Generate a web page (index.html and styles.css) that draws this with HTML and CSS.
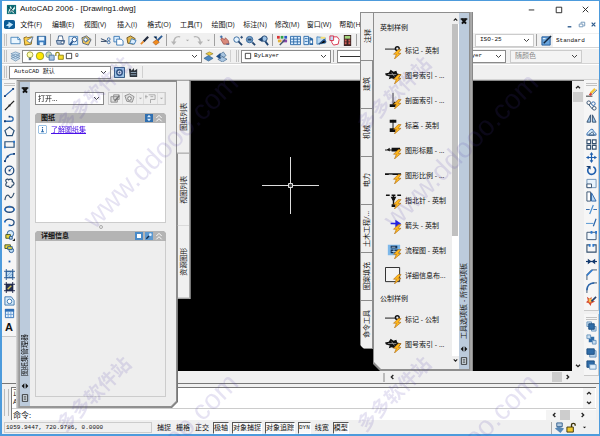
FILE: index.html
```
<!DOCTYPE html>
<html lang="zh-CN">

<head>
    <meta charset="UTF-8">
    <meta name="viewport" content="width=device-width, initial-scale=1.0">
    <title>AutoCAD 2006 - [Drawing1.dwg]</title>
    <link rel="stylesheet" href="styles.css">
</head>

<body>

    <!-- icon sprite -->
    <svg class="sprite" aria-hidden="true">
        <symbol id="logo" viewBox="0 0 12 12"><path fill="#0c6f78" d="M1 1h10v10H1z"/><path fill="#d8f4ee" d="M2 10 5 2l2 4 2-4 1 3-2 2 2 3H8L6 8l-2 2z"/><path stroke="#083c50" fill="none" d="m2 3 8 7M3 10l6-8"/></symbol>
        <symbol id="dwg" viewBox="0 0 12 12"><rect y="1" width="12" height="10" rx="2" fill="#0d5c96"/><path fill="#bfe4fa" d="m2 7 3-2V3l5 3-5 4V8z"/></symbol>
        <symbol id="new" viewBox="0 0 12 12"><path fill="#eaf6ff" stroke="#4b88bd" d="M1 2.500h8l2 2v5H1z"/><path fill="none" stroke="#4b88bd" d="M8.500 2v3H11"/></symbol>
        <symbol id="open" viewBox="0 0 12 12"><path fill="#ffd04a" stroke="#8a6a1c" d="m1 3 3-1 1 1 5-1-1 8-7 1z"/><path fill="#fff" stroke="#365f94" stroke-width=".7" d="m4 6 7-4-3 7z"/></symbol>
        <symbol id="save" viewBox="0 0 12 12"><path fill="#3d7fc0" stroke="#225a94" d="M1.500 1.500h9v9h-9z"/><path fill="#e8f4ff" d="M3 2h6v4H3zM4 8h4v3H4z"/></symbol>
        <symbol id="print" viewBox="0 0 12 12"><path fill="#fff" stroke="#426087" d="M4 1h4l1 5H3z"/><path fill="#a8bdd8" stroke="#426087" d="M1.500 6h9l-1 4h-7z"/><circle cx="8" cy="8" r="1.500" fill="#fff" stroke="#426087"/></symbol>
        <symbol id="preview" viewBox="0 0 12 12"><path fill="#dff0ff" stroke="#4b88bd" d="M1 1.500h9.500v9H1z"/><circle cx="7" cy="5" r="2.500" fill="#fff" stroke="#28548c"/><path stroke="#28548c" stroke-width="2" d="m5 7-3 4"/></symbol>
        <symbol id="publish" viewBox="0 0 12 12"><path fill="#f4c858" stroke="#54627b" d="m1 3 5-2 5 4-3 6-6-2z"/><circle cx="5" cy="5" r="2" fill="#fff" stroke="#3d6ca4"/><path stroke="#3d6ca4" d="m5 8 5-4"/></symbol>
        <symbol id="cut" viewBox="0 0 12 12"><path stroke="#253b5c" fill="none" d="m1 4 7 3M1 7h6"/><circle cx="9.500" cy="4.500" r="1.500" fill="none" stroke="#3b6ea7"/><circle cx="9.500" cy="8" r="1.500" fill="none" stroke="#3b6ea7"/></symbol>
        <symbol id="copy" viewBox="0 0 12 12"><path fill="#d9edff" stroke="#3d7ab4" d="M1 1.500h6v6H1z"/><path fill="#fff" stroke="#3d7ab4" d="M4 4.500h5l2 2V11H4z"/></symbol>
        <symbol id="paste" viewBox="0 0 12 12"><path fill="#e8ba4a" stroke="#6e5520" d="m1 3 4-2 5 3-2 6-6-1z"/><path fill="#d9edff" stroke="#3d7ab4" d="m6 4 5 2-2 4-5-1z"/></symbol>
        <symbol id="match" viewBox="0 0 12 12"><path stroke="#222b3d" stroke-width="2.400" d="m5 7 5-5"/><path stroke="#e88b2a" stroke-width="2" d="m2 10 3-3"/></symbol>
        <symbol id="brush" viewBox="0 0 12 12"><path stroke="#2b5b93" stroke-width="2" d="m6 6 5-5"/><path fill="#f08c1e" stroke="#9b4a12" stroke-width=".6" d="m1 8 4-3 3 3-4 3z"/><path stroke="#2b5b93" d="M2 2h3v3"/></symbol>
        <symbol id="undo" viewBox="0 0 12 12"><path fill="none" stroke="#b4b4b4" stroke-width="1.500" d="M10 2C5 1 3 4 3 9"/><path fill="#b4b4b4" d="M0 7h6l-3 4z"/></symbol>
        <symbol id="redo" viewBox="0 0 12 12"><path fill="none" stroke="#b4b4b4" stroke-width="1.500" d="M2 2c5-1 7 2 7 7"/><path fill="#b4b4b4" d="M12 7H6l3 4z"/></symbol>
        <symbol id="pan" viewBox="0 0 12 12"><path fill="#d98a7c" stroke="#8d3f38" stroke-width=".7" d="m2 5 1-2 3 2 1-2 3 3 1 4H5z"/><path stroke="#2c5ea0" d="M1 2h3M2.500.500v3M8 10h3"/></symbol>
        <symbol id="zoom" viewBox="0 0 12 12"><circle cx="5" cy="5" r="3" fill="#e6f4ff" stroke="#35679c"/><path stroke="#23456e" stroke-width="2" d="m7 7 4 4"/><path stroke="#23456e" d="M9 2.500h3M10.500 1v3"/></symbol>
        <symbol id="zoomwin" viewBox="0 0 12 12"><circle cx="5" cy="5" r="3.500" fill="#7ba5cc" stroke="#35679c"/><path stroke="#23456e" stroke-width="2" d="m8 8 3 3"/><path fill="#2f4c6e" d="M3 4h4v2H3z"/></symbol>
        <symbol id="zoomprev" viewBox="0 0 12 12"><circle cx="7" cy="4" r="3" fill="#9ec3e5" stroke="#1f4573"/><path stroke="#1f4573" stroke-width="2" d="m8 7 3 4"/><path fill="#1f4573" d="m0 5 5-3v6z"/></symbol>
        <symbol id="props" viewBox="0 0 12 12"><path fill="#da3535" d="M0 1h3v3H0z"/><path fill="#2fa04a" d="M4 1h3v3H4z"/><path fill="#2a56c4" d="M8 1h3v3H8z"/><path fill="#e3b43c" d="M1 5h4v3H1z"/><path fill="#8b46ae" d="M6 5h5v3H6z"/><path stroke="#45576e" stroke-width="1.500" d="m3 11 6-6"/></symbol>
        <symbol id="center" viewBox="0 0 12 12"><path fill="#d9edff" stroke="#2c6aa8" d="M.500 1.500h11v9H.500z"/><path stroke="#2c6aa8" d="M4 2v8M8 2v8M1 4.500h10M1 7.500h10"/></symbol>
        <symbol id="palettes" viewBox="0 0 12 12"><path fill="#d9edff" stroke="#2c6aa8" d="M1 1.500h5v9H1z"/><path stroke="#2c6aa8" d="M2 4h3M2 7h3"/><path fill="#2c6aa8" d="m7 2 4 2v7H7z"/><path fill="#fff" d="M8 6h2v3H8z"/></symbol>
        <symbol id="sheets" viewBox="0 0 12 12"><path fill="#b8d9f2" stroke="#4b88bd" d="m1 2 9 1v6l-9 1z"/><path stroke="#27548a" stroke-width="1.500" d="m3 10 6-5 2 3"/><path fill="#f7df72" d="M5 2h5v2H5z"/></symbol>
        <symbol id="markup" viewBox="0 0 12 12"><path fill="#fff" stroke="#d8304a" d="M3 2h6l2 3-1 5-5 1-2-3z"/><path fill="#c3daf4" stroke="#d8304a" d="M1 1h4v5H1z"/></symbol>
        <symbol id="calc" viewBox="0 0 12 12"><path fill="#3d2525" d="M2 0h8v12H2z"/><path fill="#a5d67c" d="M3 1h6v3H3z"/><path fill="#d25d55" d="M3 5h2v2H3zM7 5h2v2H7zM3 8h2v2H3zM7 8h2v2H7z"/></symbol>
        <symbol id="style" viewBox="0 0 12 12"><path fill="#69a4dc" stroke="#215b9c" d="M1 2h9v9H1z"/><path stroke="#10263f" stroke-width="1.600" d="m3 9 8-8"/><path stroke="#fff" d="M2 4h3"/></symbol>
        <symbol id="layers" viewBox="0 0 12 12"><path fill="#c9def0" stroke="#5d84a8" stroke-width=".7" d="m1 8 5-2 5 2-5 3zM1 5.500l5-2 5 2-5 3zM1 3l5-2 5 2-5 3z"/></symbol>
        <symbol id="bulb" viewBox="0 0 12 12"><circle cx="6" cy="4.500" r="3.500" fill="#ffffb0" stroke="#9c9a2c"/><path fill="#5a7187" d="M4.500 8h3v3h-3z"/></symbol>
        <symbol id="sun" viewBox="0 0 12 12"><circle cx="6" cy="6" r="4.500" fill="#ffe600" stroke="#8c9620"/></symbol>
        <symbol id="freeze" viewBox="0 0 12 12"><circle cx="4.500" cy="4.500" r="3.500" fill="#c6d9a8" stroke="#6486a0"/><path fill="#a9c6e4" stroke="#416f9d" d="M5 5h6v6H5z"/></symbol>
        <symbol id="unlock" viewBox="0 0 12 12"><path fill="none" stroke="#9b8a14" stroke-width="1.500" d="M1 6V3c0-2 4-2 4 0v2"/><path fill="#f4dc2a" stroke="#86780c" d="M4 5h6v5H4z"/></symbol>
        <symbol id="square" viewBox="0 0 12 12"><path fill="#fff" stroke="#222" stroke-width="1.200" d="M2 2h8v8H2z"/></symbol>
        <symbol id="makelayer" viewBox="0 0 12 12"><path fill="#ecc93e" stroke="#7b6e25" stroke-width=".6" d="m3 3 4-2 4 2-4 2z"/><path fill="#4c87c0" stroke="#25557f" stroke-width=".6" d="m1 8 5-3 5 3-5 3z"/></symbol>
        <symbol id="prevlayer" viewBox="0 0 12 12"><path fill="#a9c5e0" stroke="#41698f" stroke-width=".7" d="m2 9 5-3 5 3-5 3zM4 4l4-3 3 4-3 2z"/><path fill="#1f4e86" d="m0 6 5-4v7z"/></symbol>
        <symbol id="gear" viewBox="0 0 12 12"><path fill="#9cc3e6" stroke="#28507c" d="M.500.500h11v11H.500z"/><circle cx="6" cy="6" r="3" fill="#e9f3fb" stroke="#28507c" stroke-width="1.500"/><circle cx="6" cy="6" r="1" fill="#28507c"/></symbol>
        <symbol id="workspace" viewBox="0 0 12 12"><path fill="#2b323b" d="M1 2h2l1 2 2-3 1 3 3-2v9H2z"/><path stroke="#93aabe" d="M3 6h6M3 8.500h6"/></symbol>

        <symbol id="line" viewBox="0 0 12 12"><path stroke="#1f5fae" stroke-width="1.300" d="m1 10 9-8"/><path fill="#123a73" d="M0 9h2v2H0zM9 1h2v2H9z"/></symbol>
        <symbol id="xline" viewBox="0 0 12 12"><path stroke="#222" stroke-width="1.400" d="M1 11 11 1"/><path fill="#222" d="M5 5h2v2H5z"/></symbol>
        <symbol id="pline" viewBox="0 0 12 12"><path fill="none" stroke="#2c69ad" stroke-width="1.400" d="M1 9h6c4 0 4-5 0-5"/><path fill="#123a73" d="M0 8h2v2H0zM5 3h2v2H5z"/></symbol>
        <symbol id="polygon" viewBox="0 0 12 12"><path fill="none" stroke="#285078" stroke-width="1.300" d="m6 1 5 4-2 5.500H3L1 5z"/></symbol>
        <symbol id="rect" viewBox="0 0 12 12"><path fill="none" stroke="#285078" stroke-width="1.300" d="M1 3h10v6H1z"/><path fill="#2a78d0" d="M0 8h2v2H0zM10 2h2v2h-2z"/></symbol>
        <symbol id="arc" viewBox="0 0 12 12"><path fill="none" stroke="#2c69ad" stroke-width="1.400" d="M1 11C2 5 6 2 11 2"/><path fill="#123a73" d="M0 9h2v2H0zM3 4h2v2H3zM10 1h2v2h-2z"/></symbol>
        <symbol id="circle" viewBox="0 0 12 12"><circle cx="6" cy="6" r="4.700" fill="none" stroke="#234c7e" stroke-width="1.400"/><path stroke="#2a78d0" d="m6 6 3-3"/><path fill="#123a73" d="M5 5h2v2H5z"/></symbol>
        <symbol id="cloud" viewBox="0 0 12 12"><path fill="none" stroke="#34506e" stroke-width="1.300" d="M3 5C0 2 4 0 5 2c2-2 5 0 4 2 3 1 2 4 0 4 0 3-4 3-4 1-3 1-4-2-2-4z"/></symbol>
        <symbol id="spline" viewBox="0 0 12 12"><path fill="none" stroke="#34506e" stroke-width="1.300" d="M1 10c1-7 4-6 5-4s3 2 5-4"/></symbol>
        <symbol id="ellipse" viewBox="0 0 12 12"><ellipse cx="6" cy="6" rx="4.800" ry="3" fill="none" stroke="#234c7e" stroke-width="1.400"/><path fill="#2a78d0" d="M0 5h2v2H0zM10 5h2v2h-2zM5 2h2v2H5z"/></symbol>
        <symbol id="earc" viewBox="0 0 12 12"><path fill="none" stroke="#234c7e" stroke-width="1.400" d="M1 5c2-4 10-3 10 1 0 3-3 4-5 3"/><path fill="#2a78d0" d="M0 4h2v2H0zM5 8h2v2H5z"/></symbol>
        <symbol id="insert" viewBox="0 0 12 12"><circle cx="7" cy="4" r="3.500" fill="#d6ebfb" stroke="#285c96"/><path fill="#e8d73c" stroke="#46531f" d="M2 5h5v4H2z"/><path fill="#b9d3e8" stroke="#285c96" d="M6 7h3v3H6z"/><path fill="#222" d="M12 9v3H9z"/></symbol>
        <symbol id="block" viewBox="0 0 12 12"><path fill="#e8d73c" stroke="#46531f" d="M1 2h6v4H1z"/><circle cx="8" cy="8" r="2.500" fill="#bcd9f0" stroke="#285c96"/><path fill="#e8d73c" stroke="#285c96" d="M4 4h5v3H4z"/></symbol>
        <symbol id="point" viewBox="0 0 12 12"><path fill="#1f5fae" d="M5 5h2v2H5z"/></symbol>
        <symbol id="hatch" viewBox="0 0 12 12"><path fill="#bddaf2" stroke="#285c96" d="M2.500 2.500h7v7h-7z"/><path stroke="#285c96" d="M0 2.500h12M0 9.500h12M2.500 0v12M9.500 0v12"/><path stroke="#7aaad6" d="m3 8 5-5M5 9l4-4"/></symbol>
        <symbol id="gradient" viewBox="0 0 12 12"><path fill="#283255" d="M2 2h8v8H2z"/><path stroke="#1c2446" d="M0 2.500h12M0 9.500h12M2.500 0v12M9.500 0v12"/><path stroke="#d6c252" stroke-width="1.500" d="m4 8 4-4"/></symbol>
        <symbol id="region" viewBox="0 0 12 12"><path fill="#d6ebfb" stroke="#3c75ad" d="M1 2h7l3 4v5H1z"/><circle cx="6" cy="7" r="2.500" fill="#fff" stroke="#3c75ad"/></symbol>
        <symbol id="table" viewBox="0 0 12 12"><path fill="#e6f2fd" stroke="#2e6fb7" d="M1.500 1.500h9v9h-9z"/><path fill="#2e6fb7" d="M1 1h10v3H1z"/><path stroke="#6ea2d8" d="M4.500 4v6M7.500 4v6M2 7h8"/></symbol>

        <symbol id="erase" viewBox="0 0 12 12"><path stroke="#222" d="M0 10h7"/><path stroke="#f2c63a" stroke-width="2.500" d="m5 7 5-5"/><path stroke="#d8443c" stroke-width="2.500" d="m4 9 2-2"/><path stroke="#315a87" d="m7 8 5-5"/></symbol>
        <symbol id="copyobj" viewBox="0 0 12 12"><circle cx="3" cy="3" r="2" fill="none" stroke="#34506e"/><circle cx="8" cy="4" r="2" fill="none" stroke="#2a64a8"/><circle cx="9" cy="9" r="2" fill="none" stroke="#34506e"/><path stroke="#34506e" d="m3 5 4 5"/></symbol>
        <symbol id="mirror" viewBox="0 0 12 12"><path fill="#9fc6ea" stroke="#34506e" d="M5 2v8H1zM7 2v8h4z"/></symbol>
        <symbol id="offset" viewBox="0 0 12 12"><path fill="#d6ebfb" stroke="#2a64a8" d="M1 10c0-4 2-3 3-5s4-2 4 0 3 1 3 5z"/><path fill="none" stroke="#34506e" d="M3 10c0-2 2-1 3-3s2 1 3 3z"/></symbol>
        <symbol id="array" viewBox="0 0 12 12"><path fill="#fff" stroke="#34506e" stroke-width="1.200" d="M1 1h4v4H1zM7 1h4v4H7zM1 7h4v4H1zM7 7h4v4H7z"/></symbol>
        <symbol id="move" viewBox="0 0 12 12"><path stroke="#1f5fae" stroke-width="1.300" d="M1 6h10M6 1v10"/><path fill="#1f5fae" d="m6 0 2 3H4zM6 12l2-3H4zM0 6l3-2v4zM12 6 9 4v4z"/></symbol>
        <symbol id="rotate" viewBox="0 0 12 12"><path fill="none" stroke="#1f5fae" stroke-width="1.800" d="M3 3a4.300 4.300 0 1 0 5-1"/><path fill="#12396e" d="M0 1h5v4z"/></symbol>
        <symbol id="scale" viewBox="0 0 12 12"><path fill="#e8f3fc" stroke="#6c93b8" d="M1 1.500h10v9H1z"/><path fill="#fff" stroke="#34506e" d="M1 6.500h5v4H1z"/></symbol>
        <symbol id="stretch" viewBox="0 0 12 12"><path fill="#fff" stroke="#34506e" d="M1 1h4v10H1z"/><path fill="#b6d5f0" stroke="#2a64a8" d="m6 2 5 9H6z"/></symbol>
        <symbol id="trim" viewBox="0 0 12 12"><path stroke="#2a64a8" d="M0 6h4M8 6h4"/><path stroke="#4b8fd0" stroke-width="1.300" d="m4 11 4-10"/></symbol>
        <symbol id="extend" viewBox="0 0 12 12"><path stroke="#4b8fd0" d="M0 7h8"/><path stroke="#2a64a8" stroke-width="1.300" d="m8 10 3-8"/></symbol>
        <symbol id="break1" viewBox="0 0 12 12"><path fill="#f2f8fd" stroke="#34506e" d="M1 2.500h10v8H1z"/><path fill="#2a78d0" d="M5 1h2v3H5zM10 1h2v3h-2z"/></symbol>
        <symbol id="break2" viewBox="0 0 12 12"><path fill="none" stroke="#34506e" stroke-width="1.200" d="M4 2H1v8h10V2H8"/><path fill="#2a78d0" d="M3 1h2v3H3zM7 1h2v3H7z"/></symbol>
        <symbol id="join" viewBox="0 0 12 12"><path stroke="#12396e" stroke-width="1.300" d="M0 6h12"/><path fill="#12396e" d="m2 3 4 3-4 3zM10 3 6 6l4 3z"/></symbol>
        <symbol id="chamfer" viewBox="0 0 12 12"><path fill="none" stroke="#34506e" d="M1 12V6l5-5h6"/><path stroke="#2a78d0" stroke-width="1.600" d="m1 7 6-6"/></symbol>
        <symbol id="fillet" viewBox="0 0 12 12"><path fill="none" stroke="#34506e" d="M1 12V7M7 1h5"/><path fill="none" stroke="#2a64a8" stroke-width="1.600" d="M1 9c0-5 3-8 8-8"/></symbol>
        <symbol id="explode" viewBox="0 0 12 12"><path fill="#d64b33" d="m1 2 3 2 2-2v4l4 1-4 2-1 3-2-3-3-1 2-2z"/><path fill="#f6c14a" d="M3 4h3v4H3z"/><path stroke="#27406b" stroke-width="1.800" d="m6 7 5-5"/></symbol>
        <symbol id="front" viewBox="0 0 12 12"><path fill="#c9def0" stroke="#6a96c0" d="M1 1h5v5H1zM6 6h5v5H6z"/><path fill="#2f6ca8" stroke="#1f4f80" d="M3 3h6v6H3z"/></symbol>
        <symbol id="back" viewBox="0 0 12 12"><path fill="#2f6ca8" d="M3 3h6v6H3z"/><path fill="#c9def0" stroke="#6a96c0" d="M1 1h4v4H1zM7 7h4v4H7z"/></symbol>
        <symbol id="above" viewBox="0 0 12 12"><path fill="#b9d3ea" stroke="#6a96c0" d="M4 4h7v7H4z"/><path fill="#2f6ca8" stroke="#1f4f80" d="M1 2h8v6H1z"/></symbol>
        <symbol id="under" viewBox="0 0 12 12"><path fill="#2f6ca8" stroke="#1f4f80" d="M1 1h8v7H1z"/><path fill="#e3eff9" stroke="#6a96c0" d="M4 5h7v5H4z"/></symbol>

        <symbol id="bolt" viewBox="0 0 18 18"><path fill="#ffb81e" stroke="#a8650a" stroke-width=".6" d="m14 8-5 5h3l-2 5 7-6h-3l3-4z"/></symbol>
        <symbol id="p-mark" viewBox="0 0 18 18"><path stroke="#111" d="M0 7.500h12"/><circle cx="13" cy="7" r="2" fill="none" stroke="#111" stroke-width="1.500"/><use href="#bolt"/></symbol>
        <symbol id="p-index" viewBox="0 0 18 18"><path fill="#111" d="m0 7 4-1 2-3 3 2 3-1 1 3 4 1-2 3-3-1-2 3-3-1-3 1 1-3-4-1z"/><path stroke="#aaa" stroke-width=".8" d="M3 8h9M7 6l3 4"/><use href="#bolt"/></symbol>
        <symbol id="p-section" viewBox="0 0 18 18"><path stroke="#111" stroke-width=".8" d="M8.500 1v12"/><path fill="#111" d="M5 13h3l2-3 2 1-1 5H5z"/><use href="#bolt"/></symbol>
        <symbol id="p-level" viewBox="0 0 18 18"><path stroke="#111" d="M8.500 3v11"/><path fill="#111" d="M5 3h7v3H5zM5 12h6v4H5z"/><use href="#bolt"/></symbol>
        <symbol id="p-title" viewBox="0 0 18 18"><path stroke="#111" d="M0 8.500h16"/><path fill="#111" d="M2 8l3-2v4zM7 6h9v4H7z"/><use href="#bolt"/></symbol>
        <symbol id="p-scale" viewBox="0 0 18 18"><path stroke="#111" stroke-width="2" d="M0 7.500h17"/><path stroke="#eee" stroke-width=".5" d="M4 8h4"/><use href="#bolt"/></symbol>
        <symbol id="p-north" viewBox="0 0 18 18"><path stroke="#111" stroke-width="1.500" stroke-dasharray="4 2" d="M1 3.500h16"/><path stroke="#111" stroke-width="1.500" d="M9 4v12"/><path fill="#111" d="M6 5h6l-2 4H8zM7 13h4v3H7z"/><use href="#bolt"/></symbol>
        <symbol id="p-arrow" viewBox="0 0 18 18"><path stroke="#2020e8" stroke-width="1.600" d="M6 7h8"/><path fill="#2020e8" d="m11 3 6 4-6 4z"/><use href="#bolt"/></symbol>
        <symbol id="p-flow" viewBox="0 0 18 18"><path fill="#7db8ea" d="M3 3h13v11H3z"/><path fill="#123055" d="M6 4h7v3H6zM6 8h3v4H6zM10 8h4v4h-4z"/><path stroke="#d8edfb" stroke-width=".8" d="M7 5.500h4M7 10h6"/><use href="#bolt"/></symbol>
        <symbol id="p-detail" viewBox="0 0 18 18"><path fill="#f4f4f4" stroke="#222" d="M.500.500h15v15H.500z"/><use href="#bolt"/></symbol>

        <symbol id="min" viewBox="0 0 12 12"><path stroke="#222" d="M3 6.500h6"/></symbol>
        <symbol id="max" viewBox="0 0 12 12"><path fill="none" stroke="#222" d="M3.500 3.500h6v6h-6z"/></symbol>
        <symbol id="close" viewBox="0 0 12 12"><path stroke="#222" d="m3 3 6 6M9 3 3 9"/></symbol>
        <symbol id="mdimin" viewBox="0 0 12 12"><path stroke="#2c5a8c" stroke-width="1.500" d="M4 8.500h4"/></symbol>
        <symbol id="mdirestore" viewBox="0 0 12 12"><path fill="none" stroke="#6f94b8" d="M5.500 5V3.500h4v4H8M3.500 5.500h4v3h-4z"/></symbol>
        <symbol id="mdiclose" viewBox="0 0 12 12"><path stroke="#2c5a8c" stroke-width="1.300" d="m4 4 4 4M8 4 4 8"/></symbol>
        <symbol id="bigx" viewBox="0 0 12 12"><path stroke="#111" stroke-width="3" d="m3 3 6 7M9 3l-6 7"/><path fill="#111" d="M1 2h10v2H1z"/></symbol>
        <symbol id="autohide" viewBox="0 0 12 12"><path fill="#111" d="M1 6 5 2v8zM11 6 7 2v8z"/></symbol>
        <symbol id="menu" viewBox="0 0 12 12"><path fill="#dbe6ee" stroke="#222" stroke-width="1.300" d="M2 1h8v10H2z"/><path stroke="#222" d="M4 4h4M4 6h4M4 8h4"/></symbol>
        <symbol id="up" viewBox="0 0 12 12"><path fill="none" stroke="#222" stroke-width="2" d="m3 8 3-3 3 3"/></symbol>
        <symbol id="down" viewBox="0 0 12 12"><path fill="none" stroke="#222" stroke-width="2" d="m3 4 3 3 3-3"/></symbol>
        <symbol id="left" viewBox="0 0 12 12"><path fill="none" stroke="#222" stroke-width="2" d="M8 3 5 6l3 3"/></symbol>
        <symbol id="right" viewBox="0 0 12 12"><path fill="none" stroke="#222" stroke-width="2" d="m4 3 3 3-3 3"/></symbol>
        <symbol id="caret" viewBox="0 0 12 12"><path fill="currentColor" d="M2 4h8L6 8z"/></symbol>
        <symbol id="collapse" viewBox="0 0 12 12"><path fill="none" stroke="#fff" stroke-width="1.400" d="m2 6 4-4 4 4M2 11l4-4 4 4"/></symbol>
        <symbol id="refresh" viewBox="0 0 12 12"><path fill="#2f6fb0" d="M0 0h12v12H0z"/><path fill="#d8ecff" d="m6 1 3 4H3zM6 11l3-4H3z"/></symbol>
        <symbol id="detail" viewBox="0 0 12 12"><path fill="#4a8bc8" d="M0 0h12v12H0z"/><path fill="#fff" d="M3 3h6v6H3z"/></symbol>
        <symbol id="find" viewBox="0 0 12 12"><path fill="#5d99d0" d="M0 0h12v12H0z"/><circle cx="8" cy="4" r="2" fill="#e8f4ff"/><path stroke="#122b4c" stroke-width="2" d="m2 10 4-4"/></symbol>
        <symbol id="info" viewBox="0 0 12 12"><rect x=".5" y=".5" width="11" height="11" rx="2" fill="#fff" stroke="#6aa3d6"/><path stroke="#2f6fb0" stroke-width="1.500" d="M6 5v4M6 2.500V4M4 9h4"/></symbol>
        <symbol id="gsheet" viewBox="0 0 12 12"><path fill="#ddd" stroke="#8c8c8c" d="M1 4h7v6H1zM4 2h6v5H4z"/><path stroke="#777" stroke-width="1.500" d="m5 9 5-6"/></symbol>
        <symbol id="gpub" viewBox="0 0 12 12"><path fill="#ddd" stroke="#8c8c8c" d="m1 3 5-2 5 3-2 6-6-1z"/><circle cx="6" cy="6" r="2" fill="#f4f4f4" stroke="#777"/></symbol>
        <symbol id="gsel" viewBox="0 0 12 12"><path fill="none" stroke="#a5a5a5" d="M4 2h7v5H6v4M1 2v4M0 4h3M6 4h3"/></symbol>
        <symbol id="link" viewBox="0 0 12 12"><path fill="#b2c9df" stroke="#35608e" d="M3 1h6v4H3z"/><path fill="#5787b5" d="m1 7 4-2 6 2-4 5z"/></symbol>
        <symbol id="lock" viewBox="0 0 12 12"><path fill="none" stroke="#3a3108" stroke-width="1.500" d="M6 6V3c0-2 4-2 4 0v1"/><path fill="#f1c92b" stroke="#3a3108" d="M1 5.500h7V11H1z"/></symbol>
    </svg>

    <div class="window">
        <header class="titlebar">
            <svg class="icon"><use href="#logo"/></svg>
            <h1>AutoCAD 2006 - [Drawing1.dwg]</h1>
            <div class="winbtns">
                <button aria-label="最小化"><svg class="icon"><use href="#min"/></svg></button>
                <button aria-label="最大化"><svg class="icon"><use href="#max"/></svg></button>
                <button aria-label="关闭"><svg class="icon"><use href="#close"/></svg></button>
            </div>
        </header>

        <nav class="menubar">
            <svg class="icon"><use href="#dwg"/></svg>
            <button>文件(F)</button>
            <button>编辑(E)</button>
            <button>视图(V)</button>
            <button>插入(I)</button>
            <button>格式(O)</button>
            <button>工具(T)</button>
            <button>绘图(D)</button>
            <button>标注(N)</button>
            <button>修改(M)</button>
            <button>窗口(W)</button>
            <button>帮助(H)</button>
            <div class="mdibtns">
                <button aria-label="最小化图形"><svg class="icon"><use href="#mdimin"/></svg></button>
                <button aria-label="还原图形"><svg class="icon"><use href="#mdirestore"/></svg></button>
                <button aria-label="关闭图形"><svg class="icon"><use href="#mdiclose"/></svg></button>
            </div>
        </nav>

        <div class="toolbar">
            <span class="grip"></span>
            <button class="tool" aria-label="新建"><svg class="icon"><use href="#new"/></svg></button>
            <button class="tool" aria-label="打开"><svg class="icon"><use href="#open"/></svg></button>
            <button class="tool" aria-label="保存"><svg class="icon"><use href="#save"/></svg></button>
            <span class="sep"></span>
            <button class="tool" aria-label="打印"><svg class="icon"><use href="#print"/></svg></button>
            <button class="tool" aria-label="打印预览"><svg class="icon"><use href="#preview"/></svg></button>
            <button class="tool" aria-label="发布"><svg class="icon"><use href="#publish"/></svg></button>
            <span class="sep"></span>
            <button class="tool" aria-label="剪切"><svg class="icon"><use href="#cut"/></svg></button>
            <button class="tool" aria-label="复制"><svg class="icon"><use href="#copy"/></svg></button>
            <button class="tool" aria-label="粘贴"><svg class="icon"><use href="#paste"/></svg></button>
            <button class="tool" aria-label="特性匹配"><svg class="icon"><use href="#match"/></svg></button>
            <button class="tool" aria-label="块编辑器"><svg class="icon"><use href="#brush"/></svg></button>
            <span class="sep"></span>
            <button class="tool" aria-label="放弃"><svg class="icon"><use href="#undo"/></svg></button>
            <button class="drop" aria-label="放弃列表"><svg><use href="#caret"/></svg></button>
            <button class="tool" aria-label="重做"><svg class="icon"><use href="#redo"/></svg></button>
            <button class="drop" aria-label="重做列表"><svg><use href="#caret"/></svg></button>
            <span class="sep"></span>
            <button class="tool" aria-label="实时平移"><svg class="icon"><use href="#pan"/></svg></button>
            <button class="tool" aria-label="实时缩放"><svg class="icon"><use href="#zoom"/></svg></button>
            <button class="tool" aria-label="窗口缩放"><svg class="icon"><use href="#zoomwin"/></svg></button>
            <button class="tool" aria-label="缩放上一个"><svg class="icon"><use href="#zoomprev"/></svg></button>
            <span class="sep"></span>
            <button class="tool" aria-label="特性"><svg class="icon"><use href="#props"/></svg></button>
            <button class="tool" aria-label="设计中心"><svg class="icon"><use href="#center"/></svg></button>
            <button class="tool" aria-label="工具选项板"><svg class="icon"><use href="#palettes"/></svg></button>
            <button class="tool" aria-label="图纸集"><svg class="icon"><use href="#sheets"/></svg></button>
            <button class="tool" aria-label="标记集"><svg class="icon"><use href="#markup"/></svg></button>
            <button class="tool" aria-label="计算器"><svg class="icon"><use href="#calc"/></svg></button>
            <span class="sep"></span>
            <div class="styles">
                <select class="mono" aria-label="标注样式"><option>ISO-25</option></select>
                <span class="sep"></span>
                <button class="tool" aria-label="文字样式管理"><svg class="icon"><use href="#style"/></svg></button>
                <input class="mono" type="text" aria-label="文字样式" value="Standard">
            </div>
        </div>

        <div class="toolbar">
            <span class="grip"></span>
            <button class="tool" aria-label="图层特性"><svg class="icon"><use href="#layers"/></svg></button>
            <div class="combo layer">
                <svg class="icon"><use href="#bulb"/></svg>
                <svg class="icon"><use href="#sun"/></svg>
                <svg class="icon"><use href="#freeze"/></svg>
                <svg class="icon"><use href="#unlock"/></svg>
                <svg class="icon small"><use href="#square"/></svg>
                <select class="mono" aria-label="图层"><option>0</option></select>
            </div>
            <button class="tool" aria-label="置为当前"><svg class="icon"><use href="#makelayer"/></svg></button>
            <button class="tool" aria-label="上一个图层"><svg class="icon"><use href="#prevlayer"/></svg></button>
            <span class="sep wide"></span>
            <span class="grip"></span>
            <div class="combo color">
                <svg class="icon small"><use href="#square"/></svg>
                <select class="mono" aria-label="颜色"><option>ByLayer</option></select>
            </div>
            <span class="sep"></span>
            <div class="combo ltype">
                <span class="rule"></span>
                <select class="mono" aria-label="线宽"><option>ByLayer</option></select>
            </div>
            <select class="plot" aria-label="打印样式" disabled><option>随颜色</option></select>
        </div>

        <div class="toolbar">
            <span class="grip"></span>
            <select class="mono ws" aria-label="工作空间"><option>AutoCAD 默认</option></select>
            <button class="tool wsbtn" aria-label="工作空间设置"><svg class="icon"><use href="#gear"/></svg></button>
            <button class="tool" aria-label="我的工作空间"><svg class="icon"><use href="#workspace"/></svg></button>
            <span class="sep wide"></span>
        </div>

        <main class="work">
            <div class="side">
                <div class="strip">
                    <span class="hgrip"></span>
                    <button class="tool" aria-label="直线"><svg class="icon"><use href="#line"/></svg></button>
                    <button class="tool" aria-label="构造线"><svg class="icon"><use href="#xline"/></svg></button>
                    <button class="tool" aria-label="多段线"><svg class="icon"><use href="#pline"/></svg></button>
                    <button class="tool" aria-label="正多边形"><svg class="icon"><use href="#polygon"/></svg></button>
                    <button class="tool" aria-label="矩形"><svg class="icon"><use href="#rect"/></svg></button>
                    <button class="tool" aria-label="圆弧"><svg class="icon"><use href="#arc"/></svg></button>
                    <button class="tool" aria-label="圆"><svg class="icon"><use href="#circle"/></svg></button>
                    <button class="tool" aria-label="修订云线"><svg class="icon"><use href="#cloud"/></svg></button>
                    <button class="tool" aria-label="样条曲线"><svg class="icon"><use href="#spline"/></svg></button>
                    <button class="tool" aria-label="椭圆"><svg class="icon"><use href="#ellipse"/></svg></button>
                    <button class="tool" aria-label="椭圆弧"><svg class="icon"><use href="#earc"/></svg></button>
                    <button class="tool" aria-label="插入块"><svg class="icon"><use href="#insert"/></svg></button>
                    <button class="tool" aria-label="创建块"><svg class="icon"><use href="#block"/></svg></button>
                    <button class="tool" aria-label="点"><svg class="icon"><use href="#point"/></svg></button>
                    <button class="tool" aria-label="图案填充"><svg class="icon"><use href="#hatch"/></svg></button>
                    <button class="tool" aria-label="渐变色"><svg class="icon"><use href="#gradient"/></svg></button>
                    <button class="tool" aria-label="面域"><svg class="icon"><use href="#region"/></svg></button>
                    <button class="tool" aria-label="表格"><svg class="icon"><use href="#table"/></svg></button>
                    <button class="tool mtext" aria-label="多行文字">A</button>
                </div>
            </div>

            <section class="drawing">
                <div class="canvas">
                    <svg class="cursor" viewBox="0 0 57 57"><path stroke="#ddd" d="M0 28.500h57M28.500 0v57"/><path fill="#444" stroke="#ddd" d="M26.500 26.500h4v4h-4z"/></svg>
                </div>
                <div class="vscroll">
                    <button aria-label="向上滚动"><svg><use href="#up"/></svg></button>
                    <span class="thumb"></span>
                    <button class="end" aria-label="向下滚动"><svg><use href="#down"/></svg></button>
                </div>
                <div class="hscroll">
                    <span class="split"></span>
                    <button aria-label="向左滚动"><svg><use href="#left"/></svg></button>
                    <span class="thumb"></span>
                    <button aria-label="向右滚动"><svg><use href="#right"/></svg></button>
                </div>
            </section>

            <div class="side right">
                <div class="strip">
                    <span class="hgrip"></span>
                    <button class="tool" aria-label="删除"><svg class="icon"><use href="#erase"/></svg></button>
                    <button class="tool" aria-label="复制对象"><svg class="icon"><use href="#copyobj"/></svg></button>
                    <button class="tool" aria-label="镜像"><svg class="icon"><use href="#mirror"/></svg></button>
                    <button class="tool" aria-label="偏移"><svg class="icon"><use href="#offset"/></svg></button>
                    <button class="tool" aria-label="阵列"><svg class="icon"><use href="#array"/></svg></button>
                    <button class="tool" aria-label="移动"><svg class="icon"><use href="#move"/></svg></button>
                    <button class="tool" aria-label="旋转"><svg class="icon"><use href="#rotate"/></svg></button>
                    <button class="tool" aria-label="缩放"><svg class="icon"><use href="#scale"/></svg></button>
                    <button class="tool" aria-label="拉伸"><svg class="icon"><use href="#stretch"/></svg></button>
                    <button class="tool" aria-label="修剪"><svg class="icon"><use href="#trim"/></svg></button>
                    <button class="tool" aria-label="延伸"><svg class="icon"><use href="#extend"/></svg></button>
                    <button class="tool" aria-label="打断于点"><svg class="icon"><use href="#break1"/></svg></button>
                    <button class="tool" aria-label="打断"><svg class="icon"><use href="#break2"/></svg></button>
                    <button class="tool" aria-label="合并"><svg class="icon"><use href="#join"/></svg></button>
                    <button class="tool" aria-label="倒角"><svg class="icon"><use href="#chamfer"/></svg></button>
                    <button class="tool" aria-label="圆角"><svg class="icon"><use href="#fillet"/></svg></button>
                    <button class="tool" aria-label="分解"><svg class="icon"><use href="#explode"/></svg></button>
                </div>
                <div class="strip">
                    <span class="hgrip"></span>
                    <button class="tool" aria-label="前置"><svg class="icon"><use href="#front"/></svg></button>
                    <button class="tool" aria-label="后置"><svg class="icon"><use href="#back"/></svg></button>
                    <button class="tool" aria-label="置于对象之上"><svg class="icon"><use href="#above"/></svg></button>
                    <button class="tool" aria-label="置于对象之下"><svg class="icon"><use href="#under"/></svg></button>
                </div>
            </div>
        </main>

        <section class="command">
            <span class="cmdgrip"></span>
            <div class="cmdbox">
                <div class="history">
                    <p>正在重生成模型。<br>AutoCAD 菜单实用程序已加载。</p>
                    <div class="histscroll">
                        <button aria-label="上一行"><svg><use href="#up"/></svg></button>
                        <button aria-label="下一行"><svg><use href="#down"/></svg></button>
                    </div>
                </div>
                <div class="prompt">
                    <label for="cmd">命令:</label>
                    <input id="cmd" type="text">
                    <div class="cmdscroll">
                        <button aria-label="向左"><svg><use href="#left"/></svg></button>
                        <span class="thumb"></span>
                        <button aria-label="向右"><svg><use href="#right"/></svg></button>
                    </div>
                </div>
            </div>
        </section>

        <footer class="status">
            <output class="coords">1059.9447, 720.9786, 0.0000</output>
            <button>捕捉</button>
            <button>栅格</button>
            <button>正交</button>
            <button class="on">极轴</button>
            <button class="on">对象捕捉</button>
            <button class="on">对象追踪</button>
            <button class="on mono">DYN</button>
            <button>线宽</button>
            <button class="on">模型</button>
            <div class="tray">
                <svg class="icon"><use href="#link"/></svg>
                <svg class="icon"><use href="#lock"/></svg>
                <button class="drop" aria-label="状态栏菜单"><svg><use href="#caret"/></svg></button>
            </div>
        </footer>
    </div>

    <!-- sheet set manager -->
    <aside class="palette sheetset">
        <div class="frame">
            <div class="bar">
                <button aria-label="关闭图纸集"><svg><use href="#bigx"/></svg></button>
                <h2 class="vtext">图纸集管理器</h2>
                <button aria-label="自动隐藏"><svg><use href="#autohide"/></svg></button>
                <button aria-label="特性菜单"><svg><use href="#menu"/></svg></button>
            </div>
            <div class="body">
                <div class="openrow">
                    <select aria-label="图纸集"><option>打开...</option></select>
                    <div class="group">
                        <button aria-label="发布到 DWF"><svg class="icon"><use href="#gsheet"/></svg></button>
                        <button aria-label="发布"><svg class="icon"><use href="#gpub"/></svg></button>
                        <button class="drop" aria-label="发布选项"><svg><use href="#caret"/></svg></button>
                        <button aria-label="图纸选择"><svg class="icon"><use href="#gsel"/></svg></button>
                        <button class="drop" aria-label="选择选项"><svg><use href="#caret"/></svg></button>
                    </div>
                </div>
                <section class="card list">
                    <h3><span>图纸</span>
                        <button aria-label="刷新"><svg><use href="#refresh"/></svg></button>
                        <button aria-label="折叠图纸"><svg><use href="#collapse"/></svg></button>
                    </h3>
                    <div class="content">
                        <svg class="icon"><use href="#info"/></svg>
                        <a href="#">了解图纸集</a>
                    </div>
                </section>
                <span class="knob"></span>
                <section class="card detail">
                    <h3><span>详细信息</span>
                        <button aria-label="详细信息"><svg><use href="#detail"/></svg></button>
                        <button aria-label="预览"><svg><use href="#find"/></svg></button>
                        <button aria-label="折叠详细信息"><svg><use href="#collapse"/></svg></button>
                    </h3>
                    <div class="content"></div>
                </section>
            </div>
        </div>
        <div class="tabs">
            <button class="vtext active">图纸列表</button>
            <button class="vtext">视图列表</button>
            <button class="vtext">资源图形</button>
        </div>
    </aside>

    <!-- tool palettes -->
    <aside class="palette tools">
        <div class="tabs">
            <button class="vtext active">注释</button>
            <button class="vtext">建筑</button>
            <button class="vtext">机械</button>
            <button class="vtext">电力</button>
            <button class="vtext">土木工程/...</button>
            <button class="vtext">图案填充</button>
            <button class="vtext">命令工具</button>
        </div>
        <div class="frame">
            <div class="items">
                <h3>英制样例</h3>
                <button><svg><use href="#p-mark"/></svg>标记 - 英制</button>
                <button><svg><use href="#p-index"/></svg>图号索引 - ...</button>
                <button><svg><use href="#p-section"/></svg>剖面索引 - ...</button>
                <button><svg><use href="#p-level"/></svg>标高 - 英制</button>
                <button><svg><use href="#p-title"/></svg>图形标题 - ...</button>
                <button><svg><use href="#p-scale"/></svg>图形比例 - ...</button>
                <button><svg><use href="#p-north"/></svg>指北针 - 英制</button>
                <button><svg><use href="#p-arrow"/></svg>箭头 - 英制</button>
                <button><svg><use href="#p-flow"/></svg>流程图 - 英制</button>
                <button><svg><use href="#p-detail"/></svg>详细信息布...</button>
                <h3>公制样例</h3>
                <button><svg><use href="#p-mark"/></svg>标记 - 公制</button>
                <button><svg><use href="#p-index"/></svg>图号索引 - ...</button>
            </div>
            <div class="pscroll">
                <button aria-label="向上"><svg><use href="#up"/></svg></button>
                <span class="track"><span class="thumb"></span></span>
                <button aria-label="向下"><svg><use href="#down"/></svg></button>
            </div>
            <div class="bar">
                <button aria-label="关闭选项板"><svg><use href="#bigx"/></svg></button>
                <h2 class="vtext">工具选项板 - 所有选项板</h2>
                <button aria-label="自动隐藏"><svg><use href="#autohide"/></svg></button>
                <button aria-label="特性菜单"><svg><use href="#menu"/></svg></button>
            </div>
        </div>
    </aside>

    <div class="watermark" aria-hidden="true">
        <div><span class="site">多多软件站</span><span class="url">www.ddooo.com</span></div>
        <div><span class="site">多多软件站</span><span class="url">www.ddooo.com</span></div>
        <div><span class="site">多多软件站</span><span class="url">www.ddooo.com</span></div>
        <div><span class="site">多多软件站</span><span class="url">www.ddooo.com</span></div>
    </div>

</body>

</html>
```
FILE: styles.css
```
* {
    box-sizing: border-box;
}

body {
    position: relative;
    margin: 0;
    height: 100vh;
    overflow: hidden;
    background: #f0f0f0;
    color: #111;
    font-family: "Open Sans", "Noto Sans CJK SC", sans-serif;
    font-size: 7px;
    line-height: 10px;
}

h1, h2, h3, p {
    margin: 0;
    font-size: 7px;
    font-weight: normal;
}

button, select, input {
    margin: 0;
    padding: 0;
    border: 0;
    background: none;
    color: inherit;
    font: inherit;
}

button {
    display: flex;
    align-items: center;
    justify-content: center;
    white-space: nowrap;
}

svg {
    display: block;
    flex: none;
    width: 8px;
    height: 8px;
}

.sprite {
    position: absolute;
    width: 0;
    height: 0;
}

.icon {
    width: 11px;
    height: 11px;
}

.small {
    width: 8px;
    height: 8px;
}

.mono {
    font-family: "Liberation Mono", "Noto Sans CJK SC", monospace;
    font-size: 6px;
}

select {
    appearance: none;
    height: 13px;
    padding: 0 12px 0 4px;
    border: 1px solid #8a8a8a;
    background: #fff url("data:image/svg+xml,%3Csvg xmlns='http://www.w3.org/2000/svg' width='7' height='5'%3E%3Cpath d='M1 1l2.500 2.500L6 1' fill='none' stroke='%23444'/%3E%3C/svg%3E") no-repeat right 3px center;
}

/* main window */
.window {
    display: flex;
    flex-direction: column;
    height: 100%;
    border: 1px solid #4d9bdc;
    border-width: 1px 1px 2px 2px;
}

.titlebar, .menubar {
    display: flex;
    align-items: center;
    flex: none;
    height: 16px;
    padding-left: 4px;
    background: #fff;
}

.titlebar h1 {
    padding-left: 3px;
    font-family: "Liberation Sans", sans-serif;
    font-size: 8px;
}

.winbtns, .mdibtns {
    display: flex;
    margin-left: auto;
}

.winbtns button {
    width: 27px;
}

.menubar {
    height: 15px;
    padding-left: 2px;
}

.menubar > button {
    width: 32px;
}

.mdibtns button {
    width: 12px;
}

.toolbar {
    display: flex;
    align-items: center;
    flex: none;
    height: 16px;
    border-top: 1px solid #fff;
    border-bottom: 1px solid #d4d4d4;
}

.grip {
    flex: none;
    width: 3px;
    height: 12px;
    margin: 0 2px;
    border: 1px solid #c2c2c2;
    border-width: 0 1px;
}

.tool {
    flex: none;
    width: 13px;
    height: 13px;
}

.sep {
    flex: none;
    width: 1px;
    height: 12px;
    margin: 0 3px 0 2px;
    background: #a0a0a0;
}

.wide {
    background: #d0d0d0;
}

.drop {
    flex: none;
    width: 8px;
    color: #aaa;
}

.drop svg {
    width: 5px;
    height: 5px;
}

.styles {
    display: flex;
    align-items: center;
    width: 124px;
    margin-left: auto;
}

.styles select {
    flex: 1;
    border-color: #ccc;
}

.styles input {
    width: 46px;
    height: 13px;
    padding-left: 3px;
    background: #fff;
}

.combo {
    display: flex;
    align-items: center;
    height: 13px;
    padding-left: 2px;
    border: 1px solid #8a8a8a;
    background: #fff;
}

.combo .icon {
    width: 10px;
    height: 10px;
}

.combo .small {
    width: 8px;
    height: 8px;
}

.combo select {
    flex: 1;
    min-width: 0;
    height: 11px;
    padding-left: 2px;
    border: 0;
}

.layer {
    width: 180px;
}

.color {
    width: 90px;
}

.ltype {
    flex: 1;
}

.rule {
    flex: 1;
    height: 1px;
    background: #333;
}

.ltype select {
    flex: none;
    width: 50px;
}

.plot {
    width: 72px;
    margin: 0 17px 0 4px;
    border-color: #ccc;
    background-color: #f4f4f4;
    color: #888;
    opacity: 1;
}

.ws {
    width: 102px;
}

.wsbtn {
    margin: 0 1px 0 2px;
}

/* drawing area */
.work {
    display: flex;
    flex: 1;
    min-height: 0;
}

.side {
    width: 15px;
    flex: none;
}

.strip {
    display: flex;
    flex-direction: column;
    align-items: center;
    padding: 3px 0;
    border: 1px solid #c8c8c8;
    border-width: 0 1px 1px 0;
    background: #f6f6f6;
}

.right .strip {
    margin-bottom: 3px;
}

.hgrip {
    width: 11px;
    height: 3px;
    border: 1px solid #c2c2c2;
    border-width: 1px 0;
}

.mtext {
    font-family: "Liberation Sans", sans-serif;
    font-size: 11px;
    font-weight: bold;
}

.drawing {
    flex: 1;
    display: grid;
    grid-template: 1fr 12px / 1fr 12px;
    border-top: 1px solid #888;
}

.canvas {
    position: relative;
    background: #000;
}

.cursor {
    position: absolute;
    left: 245px;
    top: 76px;
    width: 57px;
    height: 57px;
}

.vscroll, .hscroll {
    display: flex;
    align-items: center;
}

.vscroll {
    flex-direction: column;
}

.vscroll button {
    width: 11px;
    height: 11px;
}

.vscroll .end {
    margin-top: auto;
}

.thumb {
    flex: none;
    width: 10px;
    height: 10px;
    background: #cdcdcd;
}

.hscroll {
    gap: 2px;
}

.hscroll .split {
    width: 3px;
    height: 9px;
    margin-left: 66%;
    border-left: 2px solid #bbb;
}

.hscroll .thumb {
    margin-left: auto;
}

/* command line */
.command {
    display: flex;
    flex: none;
    height: 37px;
    padding-top: 3px;
    border-top: 1px solid #777;
}

.cmdgrip {
    width: 5px;
    margin: 2px 2px 4px 2px;
    border: 1px solid #bbb;
    border-width: 0 1px;
}

.cmdbox {
    flex: 1;
    margin-right: 3px;
    border: 1px solid #777;
    border-width: 1px 0 0 1px;
    background: #fff;
}

.history, .prompt {
    display: flex;
    overflow: hidden;
    height: 21px;
    padding-left: 1px;
    border-bottom: 1px solid #ccc;
}

.history p {
    flex: 1;
    line-height: 9px;
}

.histscroll {
    width: 12px;
    margin-right: 1px;
    background: #f4f4f4;
}

.histscroll button {
    width: 12px;
    height: 10px;
}

.prompt {
    align-items: center;
    height: 11px;
    border: 0;
}

.prompt label {
    font-size: 8px;
}

.prompt input {
    flex: 1;
    outline: 0;
}

.cmdscroll {
    display: flex;
    align-items: center;
    justify-content: space-between;
    width: 50px;
    padding: 0 9px 0 4px;
    background: #f4f4f4;
}

.cmdscroll .thumb {
    margin-right: 8px;
}

.status {
    display: flex;
    align-items: center;
    gap: 3px;
    flex: none;
    height: 14px;
    padding: 1px 3px 0 2px;
}

.status button {
    height: 12px;
    padding: 0 1px;
}

.coords {
    width: 148px;
    height: 11px;
    margin-right: 1px;
    padding-left: 1px;
    border: 1px solid #ccc;
    font-family: "Liberation Mono", monospace;
    font-size: 6px;
    line-height: 10px;
}

.status .on {
    padding: 0;
    border: 1px solid #555;
    border-color: #555 #fff #fff #555;
    background: #f8f8f8;
}

.tray {
    display: flex;
    gap: 1px;
    margin-left: auto;
    padding: 0 6px 0 2px;
    border-left: 1px solid #aaa;
}

.tray .drop {
    width: 12px;
    color: #111;
}

/* floating palettes */
.palette {
    position: absolute;
    display: flex;
}

.frame {
    display: flex;
    background: #8d8d8d;
}

.vtext {
    writing-mode: vertical-rl;
    text-orientation: sideways;
    transform: rotate(180deg);
    white-space: nowrap;
}

.bar {
    display: flex;
    flex-direction: column;
    align-items: center;
    width: 10px;
    padding: 2px 0;
    background: #bccbdc;
}

.bar h2 {
    margin-top: auto;
    line-height: 10px;
}

.bar button {
    height: 12px;
}

.bar h2 + button {
    margin-top: 4px;
}

.tabs {
    display: flex;
    flex-direction: column;
    flex: none;
    width: 13px;
}

.tabs button {
    flex: 1;
    border: 1px solid #8d8d8d;
    background: #f0f0f0;
    line-height: 11px;
}

.sheetset {
    top: 81px;
    bottom: 28px;
    left: 16px;
    filter: drop-shadow(1px 0 0 #777);
}

.sheetset .frame {
    width: 161px;
    padding: 1px 1px 2px 4px;
    background: linear-gradient(90deg, #ddd, #999 3px, #8d8d8d);
    clip-path: polygon(0 0, 100% 0, 100% calc(100% - 6px), calc(100% - 6px) 100%, 0 100%);
}

.sheetset .body {
    display: flex;
    flex-direction: column;
    flex: 1;
    padding: 10px 10px 9px 5px;
    background: #eee;
    clip-path: polygon(0 0, 100% 0, 100% calc(100% - 5px), calc(100% - 5px) 100%, 0 100%);
}

.sheetset .tabs {
    height: 218px;
    border-right: 1px solid #aaa;
}

/* the tab text is turned 180deg, so its borders are turned too */
.sheetset .tabs button {
    border-width: 1px 1px 0 0;
}

.sheetset .tabs .active {
    border-right: 0;
}

.openrow {
    display: flex;
    justify-content: space-between;
    margin-bottom: 8px;
}

.openrow select {
    width: 69px;
    padding-left: 2px;
}

.group {
    display: flex;
    height: 13px;
    border: 1px solid #ccc;
}

.group button {
    width: 14px;
    border-right: 1px solid #ddd;
}

.group .drop {
    width: 7px;
}

.card {
    display: flex;
    flex-direction: column;
}

.card h3 {
    display: flex;
    align-items: center;
    gap: 2px;
    height: 10px;
    padding: 0 3px 0 6px;
    background: #b4b4b4;
    font-weight: bold;
    clip-path: polygon(2px 0, calc(100% - 2px) 0, 100% 2px, 100% 100%, 0 100%, 0 2px);
}

.card h3 span {
    flex: 1;
}

.card .content {
    display: flex;
    flex: 1;
    gap: 4px;
    padding: 2px;
    border: 1px solid #ccc;
    border-top: 0;
}

.card .icon {
    width: 9px;
    height: 9px;
}

.card a {
    color: #4a10e8;
    line-height: 9px;
}

.list {
    height: 110px;
}

.list .content {
    background: #fff;
}

.knob {
    align-self: center;
    width: 4px;
    height: 4px;
    margin: 2px 0;
    border: 1px solid #aaa;
    border-radius: 2px;
}

.detail {
    flex: 1;
}

.tools {
    top: 12px;
    right: 127px;
    bottom: 65px;
}

.tools .tabs {
    height: 337px;
    clip-path: polygon(0 0, 100% 0, 100% 100%, 4px 100%, 0 calc(100% - 4px));
}

.tools .tabs button {
    border-width: 1px 1px 0 1px;
}

.tools .tabs .active {
    border-bottom: 1px solid #8d8d8d;
    border-left: 0;
}

.tools .frame {
    width: 100px;
    padding: 1px 4px 2px 0;
    background: linear-gradient(90deg, #8d8d8d 97px, #bbb 98px, #777);
    clip-path: polygon(0 0, 100% 0, 100% 100%, 7px 100%, 0 calc(100% - 7px));
}

.items {
    flex: 1;
    padding: 10px 0 0 7px;
    background: #eee;
    clip-path: polygon(0 0, 100% 0, 100% 100%, 8px 100%, 1px calc(100% - 7px), 1px 0);
}

.items h3 {
    padding-bottom: 5px;
}

.items button {
    justify-content: flex-start;
    gap: 3px;
    width: 100%;
    height: 25px;
    padding-left: 5px;
}

.items button + h3 {
    padding: 6px 0 3px;
}

.items svg {
    width: 17px;
    height: 17px;
}

.pscroll {
    display: flex;
    flex-direction: column;
    width: 7px;
    padding: 3px 0 5px;
    background: #eee;
}

.pscroll svg {
    width: 7px;
    height: 7px;
}

.track {
    flex: 1;
    margin: 1px 0;
    background: #fff;
}

.pscroll .thumb {
    display: block;
    width: 6px;
    height: 64%;
    background: #c0c0c0;
}

/* watermark over the whole window */
.watermark {
    position: absolute;
    inset: 0;
    display: grid;
    grid-template: 300px 300px / 300px 300px;
    overflow: hidden;
    pointer-events: none;
    color: rgba(75, 60, 170, 0.14);
    white-space: nowrap;
}

.watermark div {
    position: relative;
}

.watermark span {
    position: absolute;
    transform: translate(-50%, -50%) rotate(-45deg);
}

.site {
    left: 94px;
    top: 94px;
    font-size: 19px;
    font-weight: bold;
    line-height: 20px;
}

.url {
    left: 161px;
    top: 151px;
    font-family: "Liberation Sans", sans-serif;
    font-size: 28px;
    line-height: 30px;
}
```
